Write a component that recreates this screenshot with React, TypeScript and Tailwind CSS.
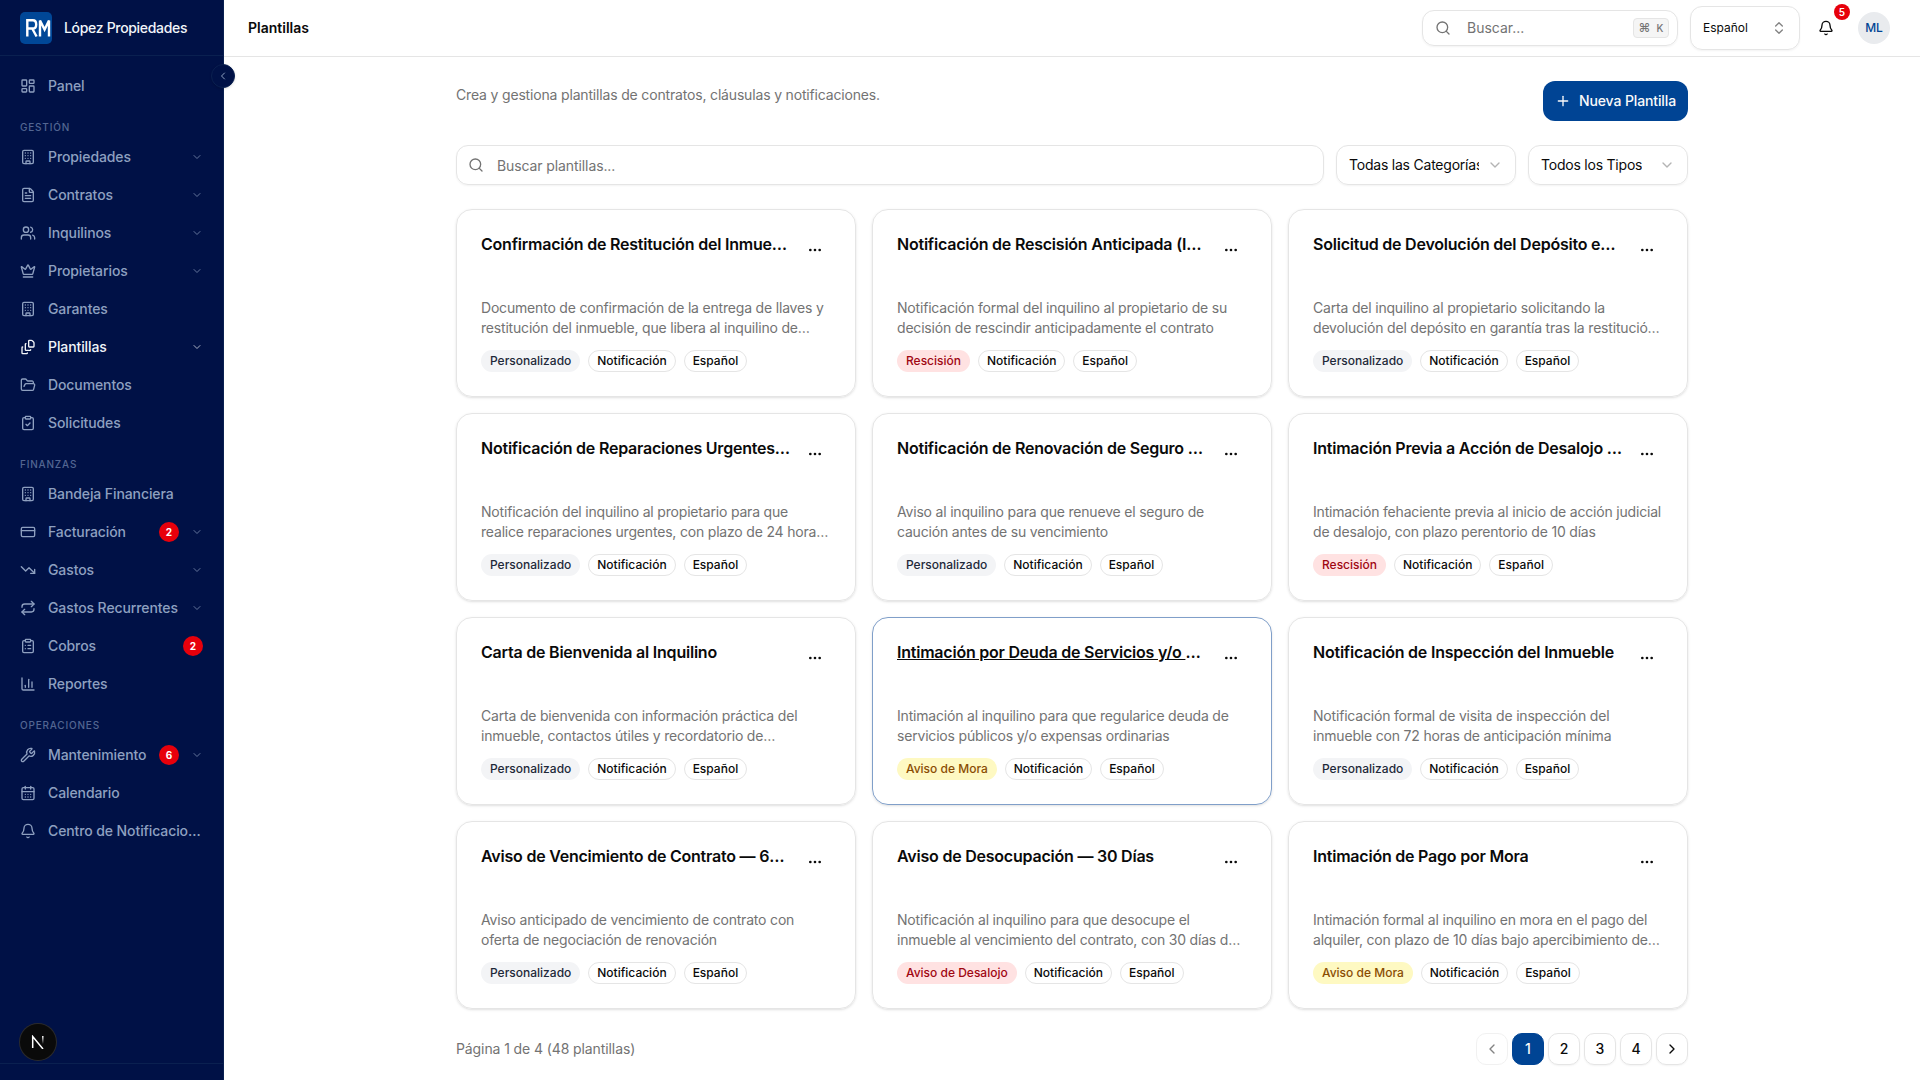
import type { ReactNode } from "react";
import {
  Bell,
  Building,
  CalendarDays,
  ChartColumn,
  ChevronDown,
  ChevronLeft,
  ChevronRight,
  ChevronsUpDown,
  ClipboardCheck,
  ClipboardList,
  CreditCard,
  Crown,
  Ellipsis,
  FileStack,
  FileText,
  FolderOpen,
  LayoutDashboard,
  Plus,
  Repeat,
  Search,
  TrendingDown,
  Users,
  Wrench,
  type LucideIcon,
} from "lucide-react";
import clsx from "clsx";

type NavItem = {
  label: string;
  icon: LucideIcon;
  expandable?: boolean;
  badge?: number;
  active?: boolean;
};

const sections: { title?: string; items: NavItem[] }[] = [
  { items: [{ label: "Panel", icon: LayoutDashboard }] },
  {
    title: "Gestión",
    items: [
      { label: "Propiedades", icon: Building, expandable: true },
      { label: "Contratos", icon: FileText, expandable: true },
      { label: "Inquilinos", icon: Users, expandable: true },
      { label: "Propietarios", icon: Crown, expandable: true },
      { label: "Garantes", icon: Building },
      { label: "Plantillas", icon: FileStack, expandable: true, active: true },
      { label: "Documentos", icon: FolderOpen },
      { label: "Solicitudes", icon: ClipboardCheck },
    ],
  },
  {
    title: "Finanzas",
    items: [
      { label: "Bandeja Financiera", icon: Building },
      { label: "Facturación", icon: CreditCard, expandable: true, badge: 2 },
      { label: "Gastos", icon: TrendingDown, expandable: true },
      { label: "Gastos Recurrentes", icon: Repeat, expandable: true },
      { label: "Cobros", icon: ClipboardList, badge: 2 },
      { label: "Reportes", icon: ChartColumn },
    ],
  },
  {
    title: "Operaciones",
    items: [
      { label: "Mantenimiento", icon: Wrench, expandable: true, badge: 6 },
      { label: "Calendario", icon: CalendarDays },
      { label: "Centro de Notificaciones", icon: Bell },
    ],
  },
];

const categories = {
  custom: { label: "Personalizado", style: "bg-gray-100 text-gray-800" },
  termination: { label: "Rescisión", style: "bg-red-100 text-red-800" },
  eviction: { label: "Aviso de Desalojo", style: "bg-red-100 text-red-800" },
  overdue: { label: "Aviso de Mora", style: "bg-yellow-100 text-yellow-800" },
};

type Template = {
  title: string;
  description: string;
  category: keyof typeof categories;
  hovered?: boolean;
};

const templates: Template[] = [
  {
    title: "Confirmación de Restitución del Inmueble",
    description:
      "Documento de confirmación de la entrega de llaves y restitución del inmueble, que libera al inquilino de responsabilidades",
    category: "custom",
  },
  {
    title: "Notificación de Rescisión Anticipada (Inquilino)",
    description:
      "Notificación formal del inquilino al propietario de su decisión de rescindir anticipadamente el contrato",
    category: "termination",
  },
  {
    title: "Solicitud de Devolución del Depósito en Garantía",
    description:
      "Carta del inquilino al propietario solicitando la devolución del depósito en garantía tras la restitución del inmueble",
    category: "custom",
  },
  {
    title: "Notificación de Reparaciones Urgentes al Propietario",
    description:
      "Notificación del inquilino al propietario para que realice reparaciones urgentes, con plazo de 24 horas según el código",
    category: "custom",
  },
  {
    title: "Notificación de Renovación de Seguro de Caución",
    description:
      "Aviso al inquilino para que renueve el seguro de caución antes de su vencimiento",
    category: "custom",
  },
  {
    title: "Intimación Previa a Acción de Desalojo Judicial",
    description:
      "Intimación fehaciente previa al inicio de acción judicial de desalojo, con plazo perentorio de 10 días",
    category: "termination",
  },
  {
    title: "Carta de Bienvenida al Inquilino",
    description:
      "Carta de bienvenida con información práctica del inmueble, contactos útiles y recordatorio de obligaciones contractuales",
    category: "custom",
  },
  {
    title: "Intimación por Deuda de Servicios y/o Expensas",
    description:
      "Intimación al inquilino para que regularice deuda de servicios públicos y/o expensas ordinarias",
    category: "overdue",
    hovered: true,
  },
  {
    title: "Notificación de Inspección del Inmueble",
    description:
      "Notificación formal de visita de inspección del inmueble con 72 horas de anticipación mínima",
    category: "custom",
  },
  {
    title: "Aviso de Vencimiento de Contrato — 60 Días",
    description:
      "Aviso anticipado de vencimiento de contrato con oferta de negociación de renovación",
    category: "custom",
  },
  {
    title: "Aviso de Desocupación — 30 Días",
    description:
      "Notificación al inquilino para que desocupe el inmueble al vencimiento del contrato, con 30 días de anticipación",
    category: "eviction",
  },
  {
    title: "Intimación de Pago por Mora",
    description:
      "Intimación formal al inquilino en mora en el pago del alquiler, con plazo de 10 días bajo apercibimiento de desalojo judicial",
    category: "overdue",
  },
];

function Logo() {
  return (
    <svg viewBox="0 0 32 32" className="h-8 w-8 shrink-0" fill="none">
      <rect width="32" height="32" rx="5" fill="#004797" />
      <g stroke="white" strokeWidth="2.4">
        <path d="M7.3 24.5V8.3H12.8Q16.2 8.3 16.2 12.4T12.8 16.5H7.3M12.2 16.5L16.6 24.5" />
        <path d="M20 24.5V8.5L24.6 17.6L29 8.5V24.5" />
      </g>
    </svg>
  );
}

function NavRow({ item }: { item: NavItem }) {
  const Icon = item.icon;
  return (
    <a
      className={clsx(
        "flex h-9 items-center rounded-lg px-3 text-sm font-medium tracking-[-0.1px]",
        item.active ? "text-[#f1f5f9]" : "text-[#8ea0c0]"
      )}
    >
      <Icon className="mr-3 h-4 w-4 shrink-0" />
      <span className="min-w-0 flex-1 truncate">{item.label}</span>
      {item.badge && (
        <span
          className={clsx(
            "flex h-5 w-5 shrink-0 items-center justify-center rounded-full bg-red-600 text-[10px] font-bold tracking-normal text-white",
            item.expandable && "mr-3"
          )}
        >
          {item.badge}
        </span>
      )}
      {item.expandable && (
        <ChevronDown className="h-3 w-3 shrink-0 opacity-70" />
      )}
    </a>
  );
}

function Sidebar() {
  return (
    <aside className="relative flex h-full w-56 shrink-0 flex-col border-r border-[#0a2050] bg-[#001146]">
      <div className="flex h-14 shrink-0 items-center gap-3 border-b border-[#0a2050] px-5">
        <Logo />
        <span className="text-sm font-medium tracking-[-0.32px] text-[#f1f5f9]">
          López Propiedades
        </span>
      </div>
      <nav className="flex flex-1 flex-col px-2 pt-3">
        {sections.map((section, i) => (
          <div key={i}>
            {section.title && (
              <div className="flex h-[35px] items-center px-3 pt-3 text-[10px] font-medium uppercase tracking-[0.08em] text-[#536692]">
                {section.title}
              </div>
            )}
            <div className="space-y-0.5">
              {section.items.map((item) => (
                <NavRow key={item.label} item={item} />
              ))}
            </div>
          </div>
        ))}
      </nav>
      <div className="h-[17px] border-t border-[#0a2050]" />

      {/* Collapse handle */}
      <button className="absolute top-16 -right-3 z-10 flex h-6 w-6 items-center justify-center rounded-full border border-[#0a2050] bg-[#001146] text-[#8ea0c0] shadow-sm">
        <ChevronLeft className="h-3 w-3" />
      </button>

      {/* Next.js dev indicator */}
      <div className="absolute bottom-5 left-5 flex h-9 w-9 items-center justify-center rounded-full bg-[#0a0a0a] ring-1 ring-[#2b2b2b]">
        <svg viewBox="0 0 14 14" className="h-3.5 w-3.5" fill="none" strokeWidth="1.5">
          <defs>
            <linearGradient id="stem" x1="12" y1="1" x2="12" y2="9" gradientUnits="userSpaceOnUse">
              <stop stopColor="white" />
              <stop offset="1" stopColor="white" stopOpacity="0" />
            </linearGradient>
          </defs>
          <path d="M1.7 13V1.5L12 14" stroke="white" />
          <path d="M11.8 1V9.5" stroke="url(#stem)" />
        </svg>
      </div>
    </aside>
  );
}

function TopBar() {
  return (
    <header className="flex h-[57px] shrink-0 items-center border-b border-neutral-200 pr-[30px] pl-6">
      <h1 className="text-sm font-semibold">Plantillas</h1>
      <div className="ml-auto flex items-center">
        <div className="flex h-9 w-64 items-center rounded-xl border border-neutral-200 pr-2 pl-3 shadow-xs">
          <Search className="mr-4 h-4 w-4 text-neutral-500" />
          <span className="flex-1 text-sm text-neutral-500">Buscar...</span>
          <kbd className="flex h-5 w-9 items-center justify-center gap-1.5 rounded border border-neutral-200 bg-neutral-100 font-[Inter] text-[10px] font-medium text-neutral-500">
            <span className="text-xs">⌘</span>K
          </kbd>
        </div>
        <div className="ml-3 flex h-11 w-[110px] items-center justify-between rounded-xl border border-neutral-200 px-3 text-xs shadow-xs">
          Español
          <ChevronsUpDown className="h-4 w-4 opacity-50" />
        </div>
        <div className="relative ml-[18px]">
          <Bell className="h-4 w-4" />
          <span className="absolute -top-4 -right-4 flex h-4 w-4 items-center justify-center rounded-full bg-red-600 text-[10px] font-semibold text-white">
            5
          </span>
        </div>
        <div className="ml-6 flex h-8 w-8 items-center justify-center rounded-full bg-[#e9ebee] text-xs font-medium text-[#004494]">
          ML
        </div>
      </div>
    </header>
  );
}

function FilterSelect({ className, children }: { className: string; children: ReactNode }) {
  return (
    <button
      className={clsx(
        "flex h-10 items-center justify-between gap-2 rounded-xl border border-neutral-200 px-3 text-sm tracking-[-0.22px] shadow-xs",
        className
      )}
    >
      <span className="overflow-hidden whitespace-nowrap">{children}</span>
      <ChevronDown className="h-4 w-4 shrink-0 opacity-30" />
    </button>
  );
}

function Badge({ className, children }: { className: string; children: ReactNode }) {
  return (
    <span className={clsx("flex h-[22px] items-center rounded-full border px-2 text-xs font-medium", className)}>
      {children}
    </span>
  );
}

function TemplateCard({ template }: { template: Template }) {
  const category = categories[template.category];
  return (
    <article
      className={clsx(
        "flex h-[188px] flex-col rounded-2xl border p-6 shadow-sm",
        template.hovered ? "border-[#809fc9]" : "border-neutral-200"
      )}
    >
      <div className="flex items-start justify-between gap-2">
        <h3
          className={clsx(
            "truncate text-base leading-5 font-semibold tracking-[-0.22px]",
            template.hovered && "underline"
          )}
        >
          {template.title}
        </h3>
        <button className="flex h-8 w-8 shrink-0 items-center justify-center">
          <Ellipsis className="h-4 w-4" />
        </button>
      </div>
      <div className="mt-auto space-y-3">
        <p className="line-clamp-2 text-sm tracking-[-0.19px] text-neutral-500">{template.description}</p>
        <div className="flex gap-2">
          <Badge className={clsx("border-transparent", category.style)}>{category.label}</Badge>
          <Badge className="border-neutral-200">Notificación</Badge>
          <Badge className="border-neutral-200">Español</Badge>
        </div>
      </div>
    </article>
  );
}

function Pagination() {
  const base = "flex h-8 w-8 items-center justify-center rounded-[10px] border text-sm font-medium";
  return (
    <div className="flex items-center justify-between text-sm">
      <p className="tracking-[-0.1px] text-neutral-500">Página 1 de 4 (48 plantillas)</p>
      <div className="flex gap-1">
        <button className={clsx(base, "border-neutral-200 opacity-50")}>
          <ChevronLeft className="h-4 w-4" />
        </button>
        <button className={clsx(base, "border-[#004494] bg-[#004494] text-neutral-50")}>1</button>
        {[2, 3, 4].map((page) => (
          <button key={page} className={clsx(base, "border-neutral-200 shadow-xs")}>
            {page}
          </button>
        ))}
        <button className={clsx(base, "border-neutral-200 shadow-xs")}>
          <ChevronRight className="h-4 w-4" />
        </button>
      </div>
    </div>
  );
}

export default function App() {
  return (
    <div className="flex h-screen overflow-hidden bg-white font-[Inter,sans-serif] text-neutral-950">
      <Sidebar />
      <div className="flex min-w-0 flex-1 flex-col">
        <TopBar />
        <main className="mx-auto flex w-full max-w-7xl flex-col gap-6 p-6">
          <div className="flex h-10 items-start justify-between">
            <p className="mt-1 text-sm tracking-[-0.17px] text-neutral-500">
              Crea y gestiona plantillas de contratos, cláusulas y notificaciones.
            </p>
            <button className="flex h-10 w-[145px] items-center justify-center gap-2 rounded-xl bg-[#004494] text-sm font-medium tracking-[-0.12px] text-neutral-50">
              <Plus className="h-4 w-4" />
              Nueva Plantilla
            </button>
          </div>

          <div className="flex gap-3">
            <div className="flex h-10 flex-1 items-center rounded-xl border border-neutral-200 px-[11px] shadow-xs">
              <Search className="mr-3 h-4 w-4 text-neutral-500" />
              <span className="mt-px ml-px text-sm tracking-[-0.1px] text-neutral-500">Buscar plantillas...</span>
            </div>
            <FilterSelect className="w-[180px]">Todas las Categorías</FilterSelect>
            <FilterSelect className="w-40">Todos los Tipos</FilterSelect>
          </div>

          <div className="grid grid-cols-3 gap-4">
            {templates.map((template) => (
              <TemplateCard key={template.title} template={template} />
            ))}
          </div>

          <Pagination />
        </main>
      </div>
    </div>
  );
}
